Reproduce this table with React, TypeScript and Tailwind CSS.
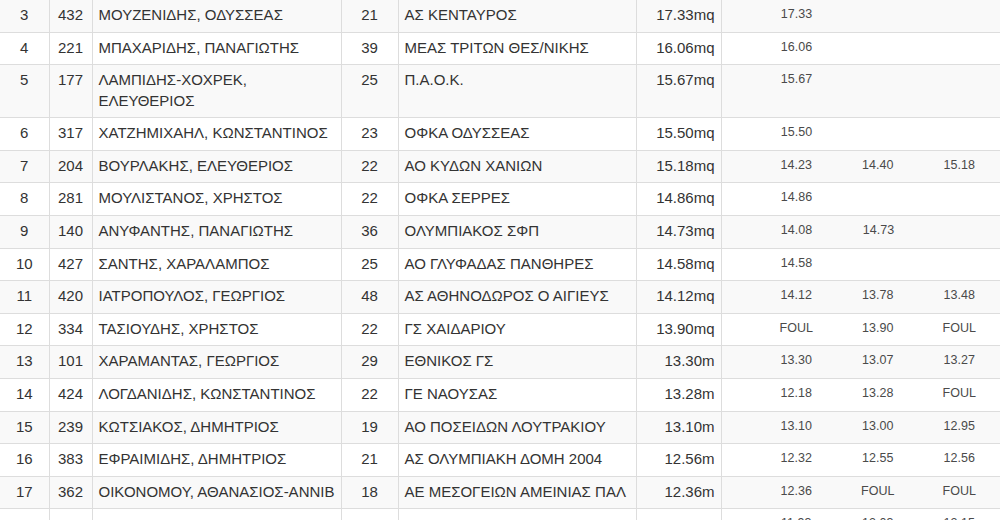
import React from "react";

type Row = {
  pos?: number;
  bib?: number;
  name?: string;
  age?: number;
  club?: string;
  mark?: string;
  tries: string[];
};

const rows: Row[] = [
  { pos: 3, bib: 432, name: "ΜΟΥΖΕΝΙΔΗΣ, ΟΔΥΣΣΕΑΣ", age: 21, club: "ΑΣ ΚΕΝΤΑΥΡΟΣ", mark: "17.33mq", tries: ["17.33"] },
  { pos: 4, bib: 221, name: "ΜΠΑΧΑΡΙΔΗΣ, ΠΑΝΑΓΙΩΤΗΣ", age: 39, club: "ΜΕΑΣ ΤΡΙΤΩΝ ΘΕΣ/ΝΙΚΗΣ", mark: "16.06mq", tries: ["16.06"] },
  { pos: 5, bib: 177, name: "ΛΑΜΠΙΔΗΣ-ΧΟΧΡΕΚ, ΕΛΕΥΘΕΡΙΟΣ", age: 25, club: "Π.Α.Ο.Κ.", mark: "15.67mq", tries: ["15.67"] },
  { pos: 6, bib: 317, name: "ΧΑΤΖΗΜΙΧΑΗΛ, ΚΩΝΣΤΑΝΤΙΝΟΣ", age: 23, club: "ΟΦΚΑ ΟΔΥΣΣΕΑΣ", mark: "15.50mq", tries: ["15.50"] },
  { pos: 7, bib: 204, name: "ΒΟΥΡΛΑΚΗΣ, ΕΛΕΥΘΕΡΙΟΣ", age: 22, club: "ΑΟ ΚΥΔΩΝ ΧΑΝΙΩΝ", mark: "15.18mq", tries: ["14.23", "14.40", "15.18"] },
  { pos: 8, bib: 281, name: "ΜΟΥΛΙΣΤΑΝΟΣ, ΧΡΗΣΤΟΣ", age: 22, club: "ΟΦΚΑ ΣΕΡΡΕΣ", mark: "14.86mq", tries: ["14.86"] },
  { pos: 9, bib: 140, name: "ΑΝΥΦΑΝΤΗΣ, ΠΑΝΑΓΙΩΤΗΣ", age: 36, club: "ΟΛΥΜΠΙΑΚΟΣ ΣΦΠ", mark: "14.73mq", tries: ["14.08", "14.73"] },
  { pos: 10, bib: 427, name: "ΣΑΝΤΗΣ, ΧΑΡΑΛΑΜΠΟΣ", age: 25, club: "ΑΟ ΓΛΥΦΑΔΑΣ ΠΑΝΘΗΡΕΣ", mark: "14.58mq", tries: ["14.58"] },
  { pos: 11, bib: 420, name: "ΙΑΤΡΟΠΟΥΛΟΣ, ΓΕΩΡΓΙΟΣ", age: 48, club: "ΑΣ ΑΘΗΝΟΔΩΡΟΣ Ο ΑΙΓΙΕΥΣ", mark: "14.12mq", tries: ["14.12", "13.78", "13.48"] },
  { pos: 12, bib: 334, name: "ΤΑΣΙΟΥΔΗΣ, ΧΡΗΣΤΟΣ", age: 22, club: "ΓΣ ΧΑΙΔΑΡΙΟΥ", mark: "13.90mq", tries: ["FOUL", "13.90", "FOUL"] },
  { pos: 13, bib: 101, name: "ΧΑΡΑΜΑΝΤΑΣ, ΓΕΩΡΓΙΟΣ", age: 29, club: "ΕΘΝΙΚΟΣ ΓΣ", mark: "13.30m", tries: ["13.30", "13.07", "13.27"] },
  { pos: 14, bib: 424, name: "ΛΟΓΔΑΝΙΔΗΣ, ΚΩΝΣΤΑΝΤΙΝΟΣ", age: 22, club: "ΓΕ ΝΑΟΥΣΑΣ", mark: "13.28m", tries: ["12.18", "13.28", "FOUL"] },
  { pos: 15, bib: 239, name: "ΚΩΤΣΙΑΚΟΣ, ΔΗΜΗΤΡΙΟΣ", age: 19, club: "ΑΟ ΠΟΣΕΙΔΩΝ ΛΟΥΤΡΑΚΙΟΥ", mark: "13.10m", tries: ["13.10", "13.00", "12.95"] },
  { pos: 16, bib: 383, name: "ΕΦΡΑΙΜΙΔΗΣ, ΔΗΜΗΤΡΙΟΣ", age: 21, club: "ΑΣ ΟΛΥΜΠΙΑΚΗ ΔΟΜΗ 2004", mark: "12.56m", tries: ["12.32", "12.55", "12.56"] },
  { pos: 17, bib: 362, name: "ΟΙΚΟΝΟΜΟΥ, ΑΘΑΝΑΣΙΟΣ-ΑΝΝΙΒ", age: 18, club: "ΑΕ ΜΕΣΟΓΕΙΩΝ ΑΜΕΙΝΙΑΣ ΠΑΛ", mark: "12.36m", tries: ["12.36", "FOUL", "FOUL"] },
  { tries: ["11.93", "12.03", "12.15"] },
];

const cell = "border-t border-l border-[#dddddd] pt-[5px] pb-[6.2px] px-[6px] align-top";

export default function App() {
  return (
    <div className="w-[1000px] h-[520px] overflow-hidden bg-white">
      <table
        className="-mt-px w-[1000px] table-fixed border-collapse text-[15px] leading-[20.4px] text-[#333333]"
        style={{ fontFamily: '"Liberation Sans", Arial, sans-serif' }}
      >
        <colgroup>
          <col className="w-[49px]" />
          <col className="w-[43px]" />
          <col className="w-[249px]" />
          <col className="w-[57px]" />
          <col className="w-[238px]" />
          <col className="w-[85px]" />
          <col />
        </colgroup>
        <tbody>
          {rows.map((r, i) => (
            <tr key={i} className={i % 2 === 0 ? "bg-[#f9f9f9]" : "bg-white"}>
              <td className={`${cell} border-l-0 text-center`}>{r.pos}</td>
              <td className={`${cell} text-center`}>{r.bib}</td>
              <td className={cell}>{r.name}</td>
              <td className={`${cell} text-center`}>{r.age}</td>
              <td className={`${cell} whitespace-nowrap`}>{r.club}</td>
              <td className={`${cell} text-right`}>{r.mark}</td>
              <td className="border-t border-l border-[#dddddd] pl-[34px] pt-[6px] align-top">
                <div className="flex text-[12.5px] leading-[16px] text-[#4a4a4a]">
                  {r.tries.map((t, j) => (
                    <div key={j} className="w-[82px] text-center">
                      {t}
                    </div>
                  ))}
                </div>
              </td>
            </tr>
          ))}
        </tbody>
      </table>
    </div>
  );
}
